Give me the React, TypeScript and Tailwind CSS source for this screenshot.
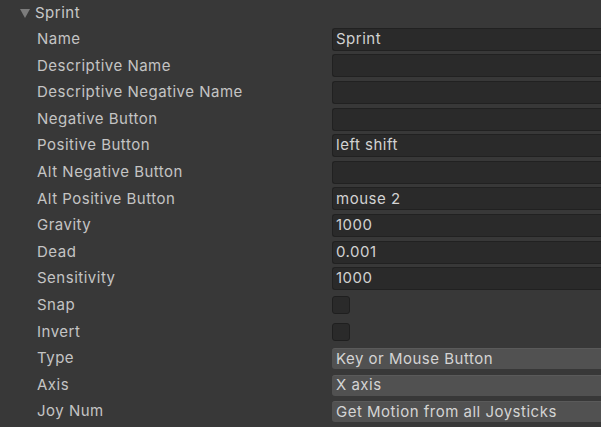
type Field =
  | { kind: "text"; value: string }
  | { kind: "check" }
  | { kind: "select"; value: string };

const rows: { label: string; field: Field }[] = [
  { label: "Name", field: { kind: "text", value: "Sprint" } },
  { label: "Descriptive Name", field: { kind: "text", value: "" } },
  { label: "Descriptive Negative Name", field: { kind: "text", value: "" } },
  { label: "Negative Button", field: { kind: "text", value: "" } },
  { label: "Positive Button", field: { kind: "text", value: "left shift" } },
  { label: "Alt Negative Button", field: { kind: "text", value: "" } },
  { label: "Alt Positive Button", field: { kind: "text", value: "mouse 2" } },
  { label: "Gravity", field: { kind: "text", value: "1000" } },
  { label: "Dead", field: { kind: "text", value: "0.001" } },
  { label: "Sensitivity", field: { kind: "text", value: "1000" } },
  { label: "Snap", field: { kind: "check" } },
  { label: "Invert", field: { kind: "check" } },
  { label: "Type", field: { kind: "select", value: "Key or Mouse Button" } },
  { label: "Axis", field: { kind: "select", value: "X axis" } },
  { label: "Joy Num", field: { kind: "select", value: "Get Motion from all Joysticks" } },
];

function FieldView({ field }: { field: Field }) {
  if (field.kind === "check") {
    return (
      <div className="w-[18px] h-[18px] rounded-[3px] bg-[#2a2a2a] border border-[#1f1f1f]" />
    );
  }
  if (field.kind === "select") {
    return (
      <div className="h-[21px] w-[280px] rounded-l-[3px] bg-[#515151] border-t border-[#5a5a5a] flex items-center px-[4px] text-[#d4d4d4] whitespace-nowrap">
        {field.value}
      </div>
    );
  }
  return (
    <div className="h-[23px] w-[280px] rounded-l-[3px] bg-[#2a2a2a] border border-r-0 border-[#212121] flex items-center px-[3px] text-[#d2d2d2] whitespace-nowrap">
      {field.value}
    </div>
  );
}

export default function App() {
  return (
    <div
      className="w-[601px] h-[427px] overflow-hidden bg-[#383838] text-[15px] tracking-[0.5px] text-[#c4c4c4]"
      style={{ fontFamily: "Inter, 'Noto Sans', sans-serif" }}
    >
      {/* Foldout header */}
      <div className="h-[25px] flex items-center pl-[20px] pt-[1px]">
        <svg width="10" height="10" viewBox="0 0 10 10" className="mr-[5px]">
          <path d="M0 1 L10 1 L5 10 Z" fill="#7c7c7c" />
        </svg>
        <span className="text-[#c8c8c8]">Sprint</span>
      </div>

      {/* Axis properties */}
      <div className="flex flex-col pt-[1px]">
        {rows.map((r) => (
          <div key={r.label} className="h-[26.6px] flex items-center">
            <div className="w-[332px] shrink-0 pl-[37px] whitespace-nowrap">{r.label}</div>
            <div className="flex-1 flex items-center">
              <FieldView field={r.field} />
            </div>
          </div>
        ))}
      </div>
    </div>
  );
}
